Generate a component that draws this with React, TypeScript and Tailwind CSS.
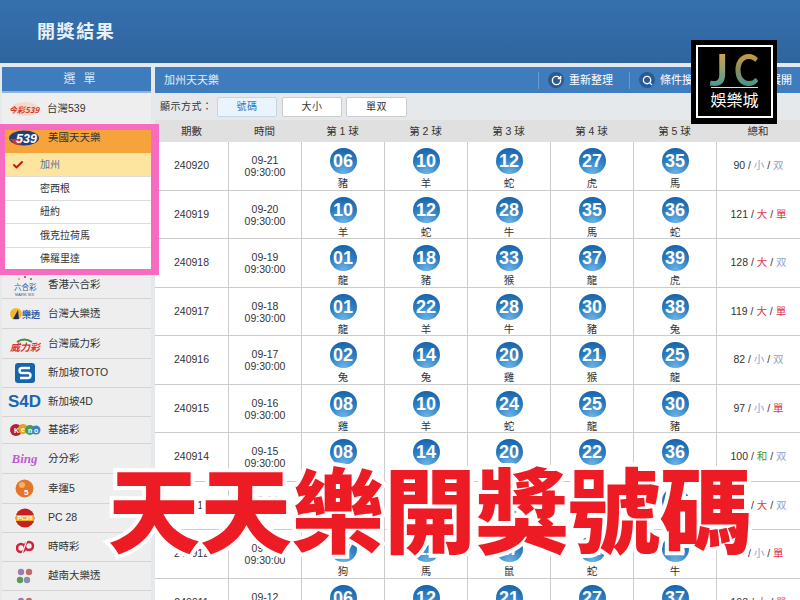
import { Check, RotateCw, Search, type LucideIcon } from "lucide-react";

const FONT = "font-['Liberation_Sans','Noto_Sans_CJK_TC',sans-serif]";

const ROWS = [
	{ id: "240920", date: "09-21", balls: [["06", "豬"], ["10", "羊"], ["12", "蛇"], ["27", "虎"], ["35", "馬"]], sum: "90", size: "小", odd: "双" },
	{ id: "240919", date: "09-20", balls: [["10", "羊"], ["12", "蛇"], ["28", "牛"], ["35", "馬"], ["36", "蛇"]], sum: "121", size: "大", odd: "單" },
	{ id: "240918", date: "09-19", balls: [["01", "龍"], ["18", "豬"], ["33", "猴"], ["37", "龍"], ["39", "虎"]], sum: "128", size: "大", odd: "双" },
	{ id: "240917", date: "09-18", balls: [["01", "龍"], ["22", "羊"], ["28", "牛"], ["30", "豬"], ["38", "兔"]], sum: "119", size: "大", odd: "單" },
	{ id: "240916", date: "09-17", balls: [["02", "兔"], ["14", "兔"], ["20", "雞"], ["21", "猴"], ["25", "龍"]], sum: "82", size: "小", odd: "双" },
	{ id: "240915", date: "09-16", balls: [["08", "雞"], ["10", "羊"], ["24", "蛇"], ["25", "龍"], ["30", "豬"]], sum: "97", size: "小", odd: "單" },
	{ id: "240914", date: "09-15", balls: [["08", "雞"], ["14", "兔"], ["20", "雞"], ["22", "羊"], ["36", "蛇"]], sum: "100", size: "和", odd: "双" },
	{ id: "240913", date: "09-14", balls: [["03", "豬"], ["16", "虎"], ["19", "狗"], ["31", "羊"], ["33", "猴"]], sum: "102", size: "大", odd: "双" },
	{ id: "240912", date: "09-13", balls: [["07", "狗"], ["11", "馬"], ["17", "鼠"], ["34", "蛇"], ["28", "牛"]], sum: "97", size: "小", odd: "單" },
	{ id: "240911", date: "09-12", balls: [["06", "豬"], ["12", "蛇"], ["21", "猴"], ["27", "虎"], ["37", "龍"]], sum: "103", size: "大", odd: "單" },
];

const HEADS = ["期數", "時間", "第 1 球", "第 2 球", "第 3 球", "第 4 球", "第 5 球", "總和"];

const GRID = "grid grid-cols-[73px_73px_83px_83px_83px_83px_83px_84px]";

function tagColor(tag: string) {
	if (tag === "大" || tag === "單") return "text-[#e0354a]";
	if (tag === "和") return "text-[#3f9a3f]";
	return "text-[#8ea5d0]";
}

function Ball({ num, animal }: { num: string; animal: string }) {
	return (
		<div className="flex h-full flex-col items-center border-l border-[#ccc] pt-[6px]">
			<div className="flex h-[26px] w-[27px] items-center justify-center rounded-full bg-[radial-gradient(circle_at_50%_95%,#6ab2e6_0%,#2a7cc0_55%,#125aa2_100%)] text-[18px] font-bold leading-none text-white">
				{num}
			</div>
			<div className="mt-[2px] text-[10.5px] leading-[14px] text-[#333]">{animal}</div>
		</div>
	);
}

function Logo({ kind }: { kind: string }) {
	if (kind === "tw539")
		return (
			<svg width="32" height="18" viewBox="0 0 32 18">
				<ellipse cx="17" cy="9" rx="14" ry="7" fill="#f6c7a8" opacity="0.5" />
				<text x="1" y="13" fontSize="8" fontWeight="700" fontStyle="italic" fill="#d8342a" fontFamily="Noto Sans CJK TC">今彩539</text>
			</svg>
		);
	if (kind === "us539")
		return (
			<svg width="30" height="16" viewBox="0 0 30 16">
				<ellipse cx="15" cy="8" rx="15" ry="7.5" fill="#1f3f7d" />
				<path d="M1 9h11v5.5H6z" fill="#d8342a" />
				<text x="7" y="13" fontSize="12.5" fontWeight="700" fontStyle="italic" fill="#fff" fontFamily="Liberation Sans">539</text>
			</svg>
		);
	if (kind === "hk")
		return (
			<svg width="24" height="24" viewBox="0 0 24 24">
				<circle cx="12" cy="4" r="1" fill="#d8342a" />
				<circle cx="6" cy="6" r="1" fill="#e2a030" />
				<circle cx="18" cy="6" r="1" fill="#3a8a4a" />
				<text x="1" y="17" fontSize="7.5" fill="#2a5ca8" fontFamily="Noto Sans CJK TC">六合彩</text>
				<text x="2" y="23" fontSize="4" fill="#2a5ca8" fontFamily="Liberation Sans">MARK SIX</text>
			</svg>
		);
	if (kind === "lotto")
		return (
			<svg width="32" height="20" viewBox="0 0 32 20">
				<ellipse cx="7" cy="10" rx="6" ry="6" fill="#f2b632" />
				<path d="M4 15 9 6l1 9z" fill="#1d2b55" />
				<text x="13" y="14" fontSize="9" fontWeight="700" fill="#2a5ca8" fontFamily="Noto Sans CJK TC">樂透</text>
			</svg>
		);
	if (kind === "power")
		return (
			<svg width="32" height="16" viewBox="0 0 32 16">
				<path d="M8 6q7-5 15 0" stroke="#3a8a4a" strokeWidth="2" fill="none" />
				<text x="1" y="15" fontSize="10" fontWeight="700" fontStyle="italic" fill="#d8342a" fontFamily="Noto Sans CJK TC">威力彩</text>
			</svg>
		);
	if (kind === "toto")
		return (
			<svg width="20" height="20" viewBox="0 0 20 20">
				<rect width="20" height="20" rx="3" fill="#1565ad" />
				<path d="M15 5H7a2 2 0 0 0 0 5h6a2 2 0 0 1 0 5H5" stroke="#fff" strokeWidth="2.4" fill="none" />
			</svg>
		);
	if (kind === "s4d")
		return <span className="text-[17px] font-bold text-[#1667b3]">S4D</span>;
	if (kind === "keno")
		return (
			<svg width="32" height="18" viewBox="0 0 32 18" fontFamily="Liberation Sans" fontSize="7" fontWeight="700" fill="#fff">
				<circle cx="7" cy="9" r="6" fill="#b5232e" />
				<circle cx="14" cy="8" r="5" fill="#e8a02c" />
				<circle cx="21" cy="9" r="5" fill="#4a9e48" />
				<circle cx="27" cy="9" r="4.5" fill="#3f7fc2" />
				<text x="5" y="12">K</text>
				<text x="12" y="11">e</text>
				<text x="19" y="12">n</text>
				<text x="25" y="12">o</text>
			</svg>
		);
	if (kind === "bing")
		return <span className="text-[13px] font-bold italic text-[#c05ad8] [font-family:'Liberation_Serif',serif]">Bing</span>;
	if (kind === "lucky5")
		return (
			<svg width="19" height="19" viewBox="0 0 19 19">
				<circle cx="9.5" cy="9.5" r="9" fill="#e2762a" />
				<circle cx="7" cy="6" r="3" fill="#f5b067" />
				<text x="9" y="16" fontSize="8" fontWeight="700" fill="#fff" fontFamily="Liberation Sans">5</text>
			</svg>
		);
	if (kind === "pc28")
		return (
			<svg width="20" height="20" viewBox="0 0 20 20">
				<circle cx="10" cy="10" r="9.5" fill="#c5201f" />
				<rect x="1" y="7" width="18" height="6" fill="#f2a922" />
				<text x="2.5" y="12.3" fontSize="6" fontWeight="700" fill="#fff" fontFamily="Liberation Sans">PC28</text>
			</svg>
		);
	if (kind === "ssc")
		return (
			<svg width="18" height="14" viewBox="0 0 18 14">
				<circle cx="5" cy="8" r="4" fill="none" stroke="#d61f3a" strokeWidth="2.6" />
				<circle cx="13" cy="6" r="4" fill="none" stroke="#d61f3a" strokeWidth="2.6" />
				<path d="M11 0 6 14" stroke="#f0f0f0" strokeWidth="1.2" />
			</svg>
		);
	return (
		<svg width="20" height="18" viewBox="0 0 20 18">
			<circle cx="6" cy="5" r="3.2" fill="#9c7ab8" />
			<circle cx="14" cy="5" r="3.2" fill="#c56a6a" />
			<circle cx="5" cy="13" r="3.2" fill="#5d9a58" />
			<circle cx="12" cy="13" r="3.2" fill="#8a8fb0" />
		</svg>
	);
}

const MENU_TOP = [
	{ kind: "hk", name: "香港六合彩", h: "h-[28px]" },
	{ kind: "lotto", name: "台灣大樂透", h: "h-[30px]" },
	{ kind: "power", name: "台灣威力彩", h: "h-[30px]" },
	{ kind: "toto", name: "新加坡TOTO", h: "h-[29px]" },
	{ kind: "s4d", name: "新加坡4D", h: "h-[29px]" },
	{ kind: "keno", name: "基諾彩", h: "h-[27px]" },
	{ kind: "bing", name: "分分彩", h: "h-[30px]" },
	{ kind: "lucky5", name: "幸運5", h: "h-[30px]" },
	{ kind: "pc28", name: "PC 28", h: "h-[29px]" },
	{ kind: "ssc", name: "時時彩", h: "h-[29px]" },
	{ kind: "vn", name: "越南大樂透", h: "h-[29px]" },
	{ kind: "vn", name: "", h: "h-[29px]" },
];

function MenuRow({ kind, name, h }: { kind: string; name: string; h: string }) {
	return (
		<div className={`${h} flex shrink-0 items-center border-b border-[#d4d4d4] bg-[#eeeeee] text-[10.5px] text-[#333]`}>
			<div className="flex w-[46px] shrink-0 justify-center pr-[1px]">
				<Logo kind={kind} />
			</div>
			<span>{name}</span>
		</div>
	);
}

function ToolButton({ icon: Icon, label }: { icon: LucideIcon; label: string }) {
	return (
		<div className="flex h-full items-center gap-[5px] border-l border-[#6f9acb] pl-[9px] pr-[16px]">
			<div className="flex h-[16px] w-[16px] items-center justify-center rounded-full bg-[#2a5a94]">
				<Icon size={11} strokeWidth={3} className="text-white" />
			</div>
			<span className="text-[11px] text-white">{label}</span>
		</div>
	);
}

export default function App() {
	return (
		<div className={`relative h-[600px] w-[800px] overflow-hidden bg-[#e6e9ec] ${FONT}`}>
			<header className="flex h-[63px] items-center bg-gradient-to-b from-[#3570ad] to-[#2f659f] pb-[2px] pl-[37px]">
				<h1 className="text-[18px] font-bold tracking-[1.6px] text-[#e8f0f8] [font-family:'Noto_Sans_CJK_TC',serif]">開獎結果</h1>
			</header>

			<div className="mt-[4px] flex h-[533px] gap-[4px] overflow-hidden">
				<aside className="ml-[2px] flex w-[149px] shrink-0 flex-col overflow-hidden">
					<div className="flex h-[26px] shrink-0 items-center justify-center border-b-2 border-[#8fb4dc] bg-[#3f7cbd] pl-[14px] text-[12px] tracking-[8px] text-[#d9e6f4]">
						選單
					</div>
					<div className="flex h-[35px] shrink-0 items-center bg-[#eeeeee] pb-[4px] text-[10.5px] text-[#333]">
						<div className="flex w-[45px] shrink-0 justify-center pr-[2px]">
							<Logo kind="tw539" />
						</div>
						<span>台灣539</span>
					</div>
					<div className="flex h-[25px] shrink-0 items-center bg-[#f6a33c] pb-[5px] text-[10.5px] text-[#333]">
						<div className="flex w-[46px] shrink-0 justify-center pr-[2px]">
							<Logo kind="us539" />
						</div>
						<span>美國天天樂</span>
					</div>
					<div className="flex h-[24px] shrink-0 items-center border-b border-[#ddd] bg-[#fde49f] text-[10px] text-[#5b6fa8]">
						<Check size={12} strokeWidth={4} className="ml-[10px] w-[12px] text-[#c01a1a]" />
						<span className="ml-[16px]">加州</span>
					</div>
					{["密西根", "紐約", "俄克拉荷馬", "佛羅里達"].map((sub) => (
						<div key={sub} className="flex h-[23.5px] shrink-0 items-center border-b border-[#ddd] bg-white pl-[38px] text-[10px] text-[#333]">
							{sub}
						</div>
					))}
					{MENU_TOP.map((m, i) => (
						<MenuRow key={i} kind={m.kind} name={m.name} h={m.h} />
					))}
				</aside>

				<main className="min-w-0 flex-1 overflow-hidden">
					<div className="flex h-[26px] items-center justify-between bg-[#3f7cbd]">
						<span className="pl-[9px] text-[11px] text-[#e3edf7]">加州天天樂</span>
						<div className="flex h-[17px]">
							<ToolButton icon={RotateCw} label="重新整理" />
							<ToolButton icon={Search} label="條件搜尋" />
							<span className="pl-[50px] pr-[8px] text-[11px] leading-[17px] text-white">展開</span>
						</div>
					</div>
					<div className="flex h-[27px] items-center bg-[#e6e9ec] pl-[5px] text-[10px] tracking-[0.5px] text-[#333]">
						<span className="w-[57px] shrink-0 whitespace-nowrap">顯示方式：</span>
						<div className="mr-[5px] flex h-[20px] w-[60px] items-center justify-center rounded-[2px] border border-[#c5d5e5] bg-[#eaf4fc] text-[#2f78c4]">號碼</div>
						<div className="mr-[4px] flex h-[20px] w-[60px] items-center justify-center rounded-[2px] border border-[#ccc] bg-white">大小</div>
						<div className="flex h-[20px] w-[61px] items-center justify-center rounded-[2px] border border-[#ccc] bg-white">單双</div>
					</div>
					<div className={`${GRID} h-[22px] items-center bg-[#e0e0e0] pt-[1px] text-center text-[10.5px] text-[#333]`}>
						{HEADS.map((h) => (
							<div key={h}>{h}</div>
						))}
					</div>
					<div className="bg-white">
						{ROWS.map((row) => (
							<div key={row.id} className={`${GRID} h-[48.5px] border-b border-[#ccc] text-[10.5px] text-[#333]`}>
								<div className="flex items-center justify-center">{row.id}</div>
								<div className="flex flex-col items-center justify-center border-l border-[#ccc] leading-[12px]">
									<span>{row.date}</span>
									<span>09:30:00</span>
								</div>
								{row.balls.map(([num, animal], i) => (
									<Ball key={i} num={num} animal={animal} />
								))}
								<div className="flex items-center justify-center border-l border-[#ccc] text-[10.5px]">
									{row.sum}&nbsp;/&nbsp;<span className={tagColor(row.size)}>{row.size}</span>&nbsp;/&nbsp;<span className={tagColor(row.odd)}>{row.odd}</span>
								</div>
							</div>
						))}
					</div>
				</main>
			</div>

			{/* pink highlight around the 美國天天樂 group */}
			<div className="pointer-events-none absolute left-0 top-[124px] h-[151px] w-[159px] border-[6px] border-l-[5px] border-r-[8px] border-[#f76cc1]" />

			{/* JC badge */}
			<div className="absolute left-[691px] top-[40px] h-[84px] w-[86px] bg-black pb-[6px] pl-[5px] pr-[4px] pt-[5px]">
				<div className="flex h-full w-full flex-col items-center border-[2px] border-white">
					<div className="flex h-[40px] w-[50px] items-center pt-[4px] text-[44px] font-bold leading-[40px] [font-family:'Lato',sans-serif]">
						<span className="inline-block bg-gradient-to-b from-[#e0a03a] to-[#1f9a96] bg-clip-text text-transparent">J</span>
						<span className="ml-[6px] inline-block origin-left scale-x-[0.85] bg-gradient-to-b from-[#e0a03a] via-[#8a8a5a] to-[#1f9a96] bg-clip-text text-transparent">C</span>
					</div>
					<div className="h-[1px] w-[47px] bg-[#ddd]" />
					<div className="mt-[2px] text-[16px] leading-[21px] text-white">娛樂城</div>
				</div>
			</div>

			{/* promo title */}
			<div className="pointer-events-none absolute left-[108px] top-[446px] whitespace-nowrap text-[92px] font-black leading-[120px] text-[#ed1c24] [-webkit-text-stroke:8px_white] [paint-order:stroke_fill] [font-family:'Noto_Sans_CJK_TC',sans-serif]">
				天天樂開獎號碼
			</div>
		</div>
	);
}
